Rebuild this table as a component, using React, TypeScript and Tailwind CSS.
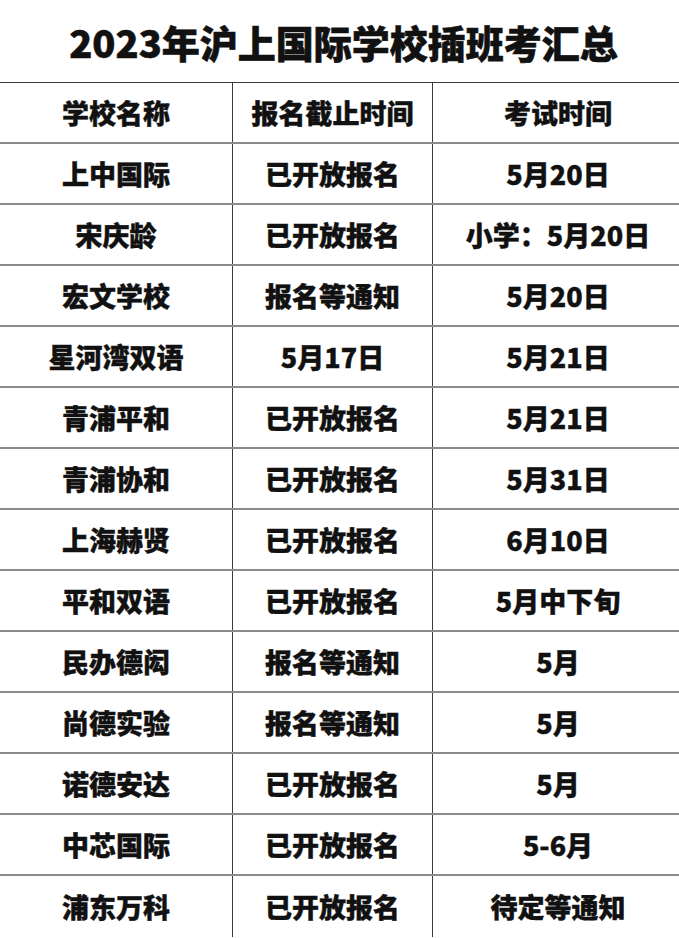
import React from "react";

const rows: [string, string, string][] = [
  ["上中国际", "已开放报名", "5月20日"],
  ["宋庆龄", "已开放报名", "小学：5月20日"],
  ["宏文学校", "报名等通知", "5月20日"],
  ["星河湾双语", "5月17日", "5月21日"],
  ["青浦平和", "已开放报名", "5月21日"],
  ["青浦协和", "已开放报名", "5月31日"],
  ["上海赫贤", "已开放报名", "6月10日"],
  ["平和双语", "已开放报名", "5月中下旬"],
  ["民办德闳", "报名等通知", "5月"],
  ["尚德实验", "报名等通知", "5月"],
  ["诺德安达", "已开放报名", "5月"],
  ["中芯国际", "已开放报名", "5-6月"],
  ["浦东万科", "已开放报名", "待定等通知"],
];

function Row({ cells, last }: { cells: [string, string, string]; last?: boolean }) {
  return (
    <div
      className={
        "grid grid-cols-[232px_200px_1fr] h-[61px] " +
        (last ? "" : "border-b-2 border-[#8c8c8c]")
      }
    >
      <div className="flex items-center justify-center">{cells[0]}</div>
      <div className="flex items-center justify-center border-l border-[#3a3a3a]">{cells[1]}</div>
      <div className="flex items-center justify-center border-l border-[#3a3a3a] pl-[4px]">{cells[2]}</div>
    </div>
  );
}

export default function App() {
  return (
    <div
      className="w-[679px] h-[938px] overflow-hidden bg-white text-[#111]"
      style={{ fontFamily: '"Noto Sans CJK SC", "Noto Sans", sans-serif' }}
    >
      <div className="h-[82px] flex items-center justify-center pt-[2px] pl-[8px]">
        <h1 className="text-[38px] font-black leading-none tracking-[0px] [-webkit-text-stroke:0.6px_#111]">
          2023年沪上国际学校插班考汇总
        </h1>
      </div>
      <div className="border-t border-[#3a3a3a] text-[27px] font-black leading-none [-webkit-text-stroke:0.4px_#111]">
        <Row cells={["学校名称", "报名截止时间", "考试时间"]} />
        {rows.map((r, i) => (
          <Row key={i} cells={r} last={i === rows.length - 1} />
        ))}
      </div>
    </div>
  );
}
